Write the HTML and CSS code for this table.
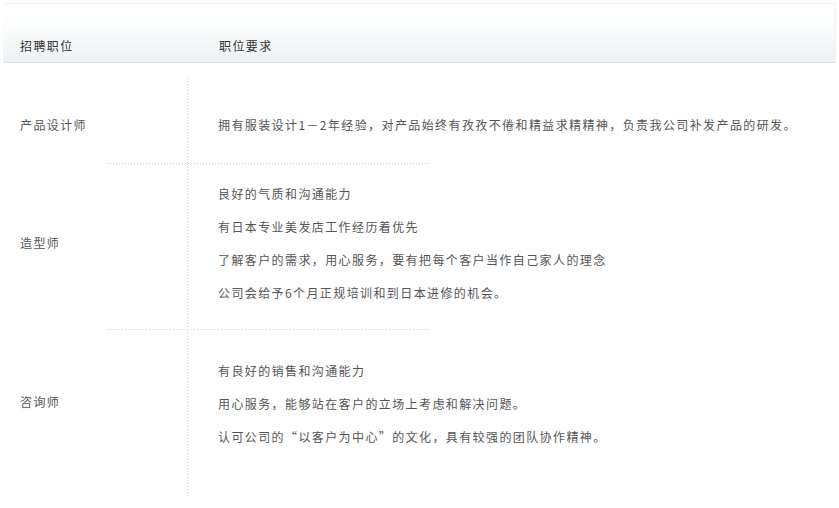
FILE: index.html
```html
<!DOCTYPE html>
<html lang="zh-CN">
<head>
    <meta charset="UTF-8">
    <meta name="viewport" content="width=device-width, initial-scale=1.0">
    <title>招聘职位</title>
    <link rel="stylesheet" href="styles.css">
</head>
<body>
    <div class="page">
        <!-- Table header -->
        <div class="head">
            <div class="head-name">招聘职位</div>
            <div class="head-req">职位要求</div>
        </div>

        <!-- Job list -->
        <div class="jobs">
            <div class="row row-first">
                <div class="name">产品设计师</div>
                <div class="req">
                    <p>拥有服装设计1－2年经验，对产品始终有孜孜不倦和精益求精精神，负责我公司补发产品的研发。</p>
                </div>
            </div>
            <div class="sep"></div>
            <div class="row row-second">
                <div class="name">造型师</div>
                <div class="req">
                    <p>良好的气质和沟通能力</p>
                    <p>有日本专业美发店工作经历着优先</p>
                    <p>了解客户的需求，用心服务，要有把每个客户当作自己家人的理念</p>
                    <p>公司会给予6个月正规培训和到日本进修的机会。</p>
                </div>
            </div>
            <div class="sep"></div>
            <div class="row row-third">
                <div class="name">咨询师</div>
                <div class="req">
                    <p>有良好的销售和沟通能力</p>
                    <p>用心服务，能够站在客户的立场上考虑和解决问题。</p>
                    <p>认可公司的“以客户为中心”的文化，具有较强的团队协作精神。</p>
                </div>
            </div>
        </div>
    </div>
</body>
</html>
```

FILE: styles.css
```css
/* Reset */
* {
    margin: 0;
    padding: 0;
    box-sizing: border-box;
}

body {
    background: #fff;
    font-family: "Noto Sans CJK SC", "Noto Sans", sans-serif;
    font-size: 12px;
    letter-spacing: 1.4px;
    color: #555;
}

.page {
    padding: 3px 3px 0;
}

/* Header bar */
.head {
    display: flex;
    height: 60px;
    padding-top: 32px;
    line-height: 20px;
    color: #333;
    background: linear-gradient(to bottom, #fff 0%, #fcfdfd 35%, #ecf1f3 100%);
    border-top: 1px solid #f1f3f4;
    border-right: 1px solid #f1f3f4;
    border-bottom: 1px solid #dae2e6;
}

.head-name {
    width: 184px;
    padding-left: 17px;
}

.head-req {
    padding-left: 32px;
}

/* Rows */
.jobs {
    margin-top: 15px;
}

.row {
    display: flex;
}

.name {
    width: 184px;
    padding-left: 17px;
    display: flex;
    align-items: center;
}

.req {
    flex: 1;
    padding-left: 31px;
    background-image: linear-gradient(to bottom, #cfcfcf 1px, transparent 1px);
    background-size: 1px 3px;
    background-repeat: repeat-y;
    background-position: left top;
}

.req p {
    line-height: 33px;
}

.row-first .name,
.row-first .req {
    padding-top: 30px;
    padding-bottom: 22px;
}

.row-second .req {
    padding-top: 13px;
    padding-bottom: 20px;
}

.row-second .name {
    padding-top: 13px;
    padding-bottom: 22px;
}

.row-third .req {
    padding-top: 24px;
    padding-bottom: 43px;
}

.row-third .name {
    padding-top: 24px;
    padding-bottom: 47px;
}

/* Dotted separator between rows */
.sep {
    height: 1px;
    width: 324px;
    margin-left: 104px;
    background-image: linear-gradient(to right, #cfcfcf 1px, transparent 1px);
    background-size: 3px 1px;
    background-repeat: repeat-x;
}
```
